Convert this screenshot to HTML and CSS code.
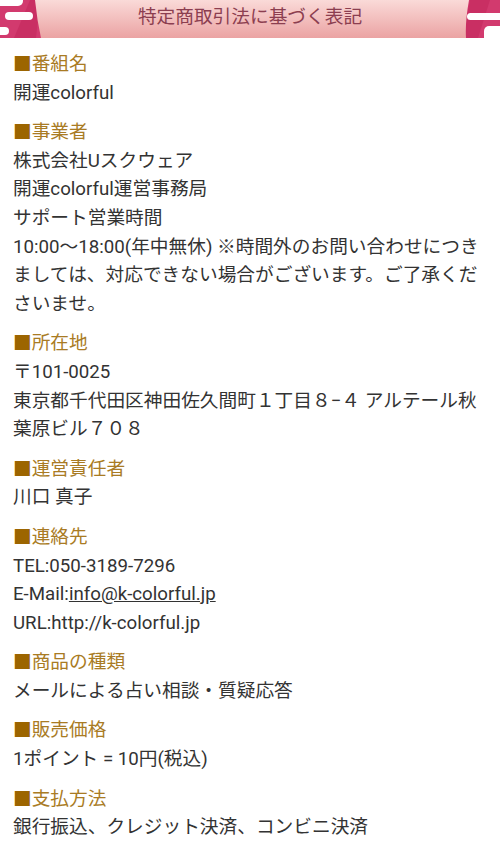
FILE: index.html
```html
<!DOCTYPE html>
<html lang="ja">
<head>
	<meta charset="UTF-8">
	<title>特定商取引法に基づく表記</title>
	<link rel="stylesheet" href="styles.css">
</head>
<body>
	<header class="page-head">
		<svg class="head-art" viewBox="0 0 500 38" preserveAspectRatio="none" aria-hidden="true">
			<defs>
				<linearGradient id="band" x1="0" y1="0" x2="0" y2="1">
					<stop offset="0" stop-color="#fadad8"/>
					<stop offset="1" stop-color="#eba3a3"/>
				</linearGradient>
			</defs>
			<rect width="500" height="38" fill="#d23a6e"/>
			<path d="M14 38 L30 0 L40 0 L36 38 Z" fill="#c92f63"/>
			<path d="M470 0 L490 0 L478 38 L462 38 Z" fill="#c92f63"/>
			<path d="M35 0 L469 0 Q465 22 466 38 L41 38 Q37 20 35 0 Z" fill="url(#band)"/>
			<!-- left clouds -->
			<rect x="-10" y="-6" width="33" height="12" rx="5" fill="#fff"/>
			<rect x="5" y="12" width="28" height="8" rx="4" fill="#fff"/>
			<rect x="-6" y="27" width="15" height="8" rx="4" fill="#fff"/>
			<!-- right clouds -->
			<rect x="467" y="13" width="40" height="7" rx="3.5" fill="#fff"/>
			<rect x="484" y="26" width="30" height="16" rx="5" fill="#fff"/>
		</svg>
		<h1 class="head-title">特定商取引法に基づく表記</h1>
	</header>

	<main class="notice">
		<section class="item">
			<h2>番組名</h2>
			<p>開運colorful</p>
		</section>
		<section class="item">
			<h2>事業者</h2>
			<p>株式会社Uスクウェア</p>
			<p>開運colorful運営事務局</p>
			<p>サポート営業時間</p>
			<p>10:00〜18:00(年中無休) ※時間外のお問い合わせにつきましては、対応できない場合がございます。ご了承くださいませ。</p>
		</section>
		<section class="item">
			<h2>所在地</h2>
			<p>〒101-0025</p>
			<p>東京都千代田区神田佐久間町１丁目８−４ アルテール秋葉原ビル７０８</p>
		</section>
		<section class="item">
			<h2>運営責任者</h2>
			<p>川口 真子</p>
		</section>
		<section class="item">
			<h2>連絡先</h2>
			<p>TEL:050-3189-7296</p>
			<p>E-Mail:<a href="#">info@k-colorful.jp</a></p>
			<p>URL:http://k-colorful.jp</p>
		</section>
		<section class="item">
			<h2>商品の種類</h2>
			<p>メールによる占い相談・質疑応答</p>
		</section>
		<section class="item">
			<h2>販売価格</h2>
			<p>1ポイント = 10円(税込)</p>
		</section>
		<section class="item">
			<h2>支払方法</h2>
			<p>銀行振込、クレジット決済、コンビニ決済</p>
		</section>
	</main>
</body>
</html>
```

FILE: styles.css
```css
body {
	margin: 0;
	background: #fff;
	color: #333;
	font-family: Roboto, "Noto Sans CJK JP", sans-serif;
	font-size: 18.7px;
	line-height: 28.6px;
}
.page-head {
	display: grid;
	height: 38px;
	overflow: hidden;
}
.head-art {
	grid-area: 1 / 1;
	width: 100%;
	height: 38px;
	display: block;
}
.head-title {
	grid-area: 1 / 1;
	margin: 0;
	padding-bottom: 4px;
	align-self: center;
	text-align: center;
	font-size: 18.7px;
	font-weight: normal;
	line-height: 28px;
	color: #8c3e50;
}
.notice {
	padding: 0 13px;
}
.item {
	margin-top: 11px;
}
.item:first-child {
	margin-top: 12px;
}
.item h2 {
	margin: 0;
	font-size: 18.7px;
	font-weight: normal;
	line-height: 28.6px;
	color: #a97b24;
}
.item h2::before {
	content: "■";
	color: #9c6500;
}
.item p {
	margin: 0;
}
.item a {
	color: #333;
	text-decoration: underline;
}
```
